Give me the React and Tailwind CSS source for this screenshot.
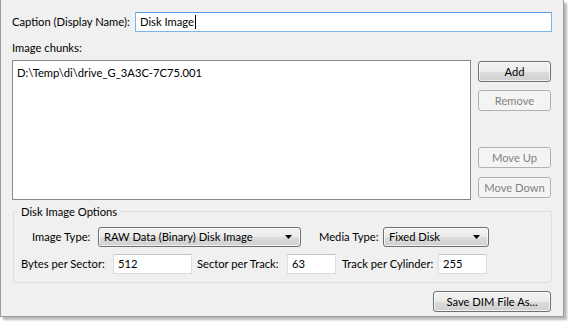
import { useState } from "react";

const btnBase =
  "flex-none h-[21px] rounded-[3px] border leading-none whitespace-nowrap flex items-center justify-center";
const btnOn =
  "border-[#707070] bg-[linear-gradient(#f2f2f2_0%,#ebebeb_50%,#dddddd_51%,#cfcfcf_100%)] text-black shadow-[inset_0_0_0_1px_rgba(255,255,255,0.7)]";
const btnOff = "border-[#adb2b5] bg-[#f4f4f4] text-[#838383]";

function Button({ children, disabled, className = "" }) {
  return (
    <button className={btnBase + " " + (disabled ? btnOff : btnOn) + " " + className}>
      {children}
    </button>
  );
}

function Combo({ value, className = "" }) {
  return (
    <div
      className={
        "flex-none h-[20px] rounded-[3px] border border-[#707070] bg-[linear-gradient(#f2f2f2_0%,#ebebeb_50%,#dddddd_51%,#cfcfcf_100%)] shadow-[inset_0_0_0_1px_rgba(255,255,255,0.7)] flex items-center pl-[5px] pr-[8px] " +
        className
      }
    >
      <span className="flex-1 truncate">{value}</span>
      <svg width="7" height="4" viewBox="0 0 7 4" className="flex-none">
        <path d="M0 0h7L3.5 4z" fill="#000" />
      </svg>
    </div>
  );
}

function Field({ value, className = "" }) {
  return (
    <div
      className={
        "flex-none h-[20px] bg-white border border-[#dadde2] border-t-[#c2c5cb] flex items-center pl-[4px] " +
        className
      }
    >
      {value}
    </div>
  );
}

export default function App() {
  const [caption] = useState("Disk Image");
  const chunks = ["D:\\Temp\\di\\drive_G_3A3C-7C75.001"];

  return (
    <div className="w-[568px] h-[322px] bg-white font-['Lato',sans-serif] text-[11.2px] text-black whitespace-nowrap">
      <div className="w-[564px] h-[317px] bg-[#f0f0f0] border-x border-b border-[#9c9c9c] shadow-[3px_3px_2px_rgba(0,0,0,0.28)] px-[11px] pt-[12px] flex flex-col">
        <div className="flex-none flex items-center h-[20px]">
          <span>Caption (Display Name):</span>
          <div className="ml-auto flex-none w-[417px] h-[20px] bg-white border border-[#7eb4ea] border-t-[#569de5] flex items-center pl-[4px]">
            <span>{caption}</span>
            <span className="w-px h-[14px] bg-black ml-px" />
          </div>
        </div>

        <div className="flex-none mt-[8px] leading-[15px]">Image chunks:</div>

        <div className="flex-none mt-[5px] flex h-[140px]">
          <div className="w-[459px] bg-white border border-[#828790] pl-[4px] pt-[4px] leading-[16px]">
            {chunks.map((c) => (
              <div key={c}>{c}</div>
            ))}
          </div>
          <div className="ml-auto mr-px w-[73px] flex flex-col pt-px pb-[2px]">
            <Button>Add</Button>
            <Button disabled className="mt-[8px]">Remove</Button>
            <div className="flex-1" />
            <Button disabled className="h-[20px]">Move Up</Button>
            <Button disabled className="mt-[9px] h-[20px]">Move Down</Button>
          </div>
        </div>

        <fieldset className="flex-none mt-[4px] ml-px border border-[#d5dfe5] rounded-[3px] pb-[8px]">
          <legend className="ml-[5px] px-[2px] leading-[15px]">Disk Image Options</legend>
          <div className="flex items-center mt-[8px] pl-[18px]">
            <span className="w-[66px]">Image Type:</span>
            <Combo value="RAW Data (Binary) Disk Image" className="w-[203px]" />
            <span className="ml-[18px] w-[64px]">Media Type:</span>
            <Combo value="Fixed Disk" className="w-[106px]" />
          </div>
          <div className="flex items-center mt-[7px] pl-[7px]">
            <span className="w-[92px]">Bytes per Sector:</span>
            <Field value="512" className="w-[79px]" />
            <span className="ml-[5px] w-[90px]">Sector per Track:</span>
            <Field value="63" className="w-[49px]" />
            <span className="ml-[6px] w-[96px]">Track per Cylinder:</span>
            <Field value="255" className="w-[49px]" />
          </div>
        </fieldset>

        <div className="flex-none mt-[8px] flex justify-end">
          <Button className="w-[118px] h-[20px] mr-px">Save DIM File As...</Button>
        </div>
      </div>
    </div>
  );
}
